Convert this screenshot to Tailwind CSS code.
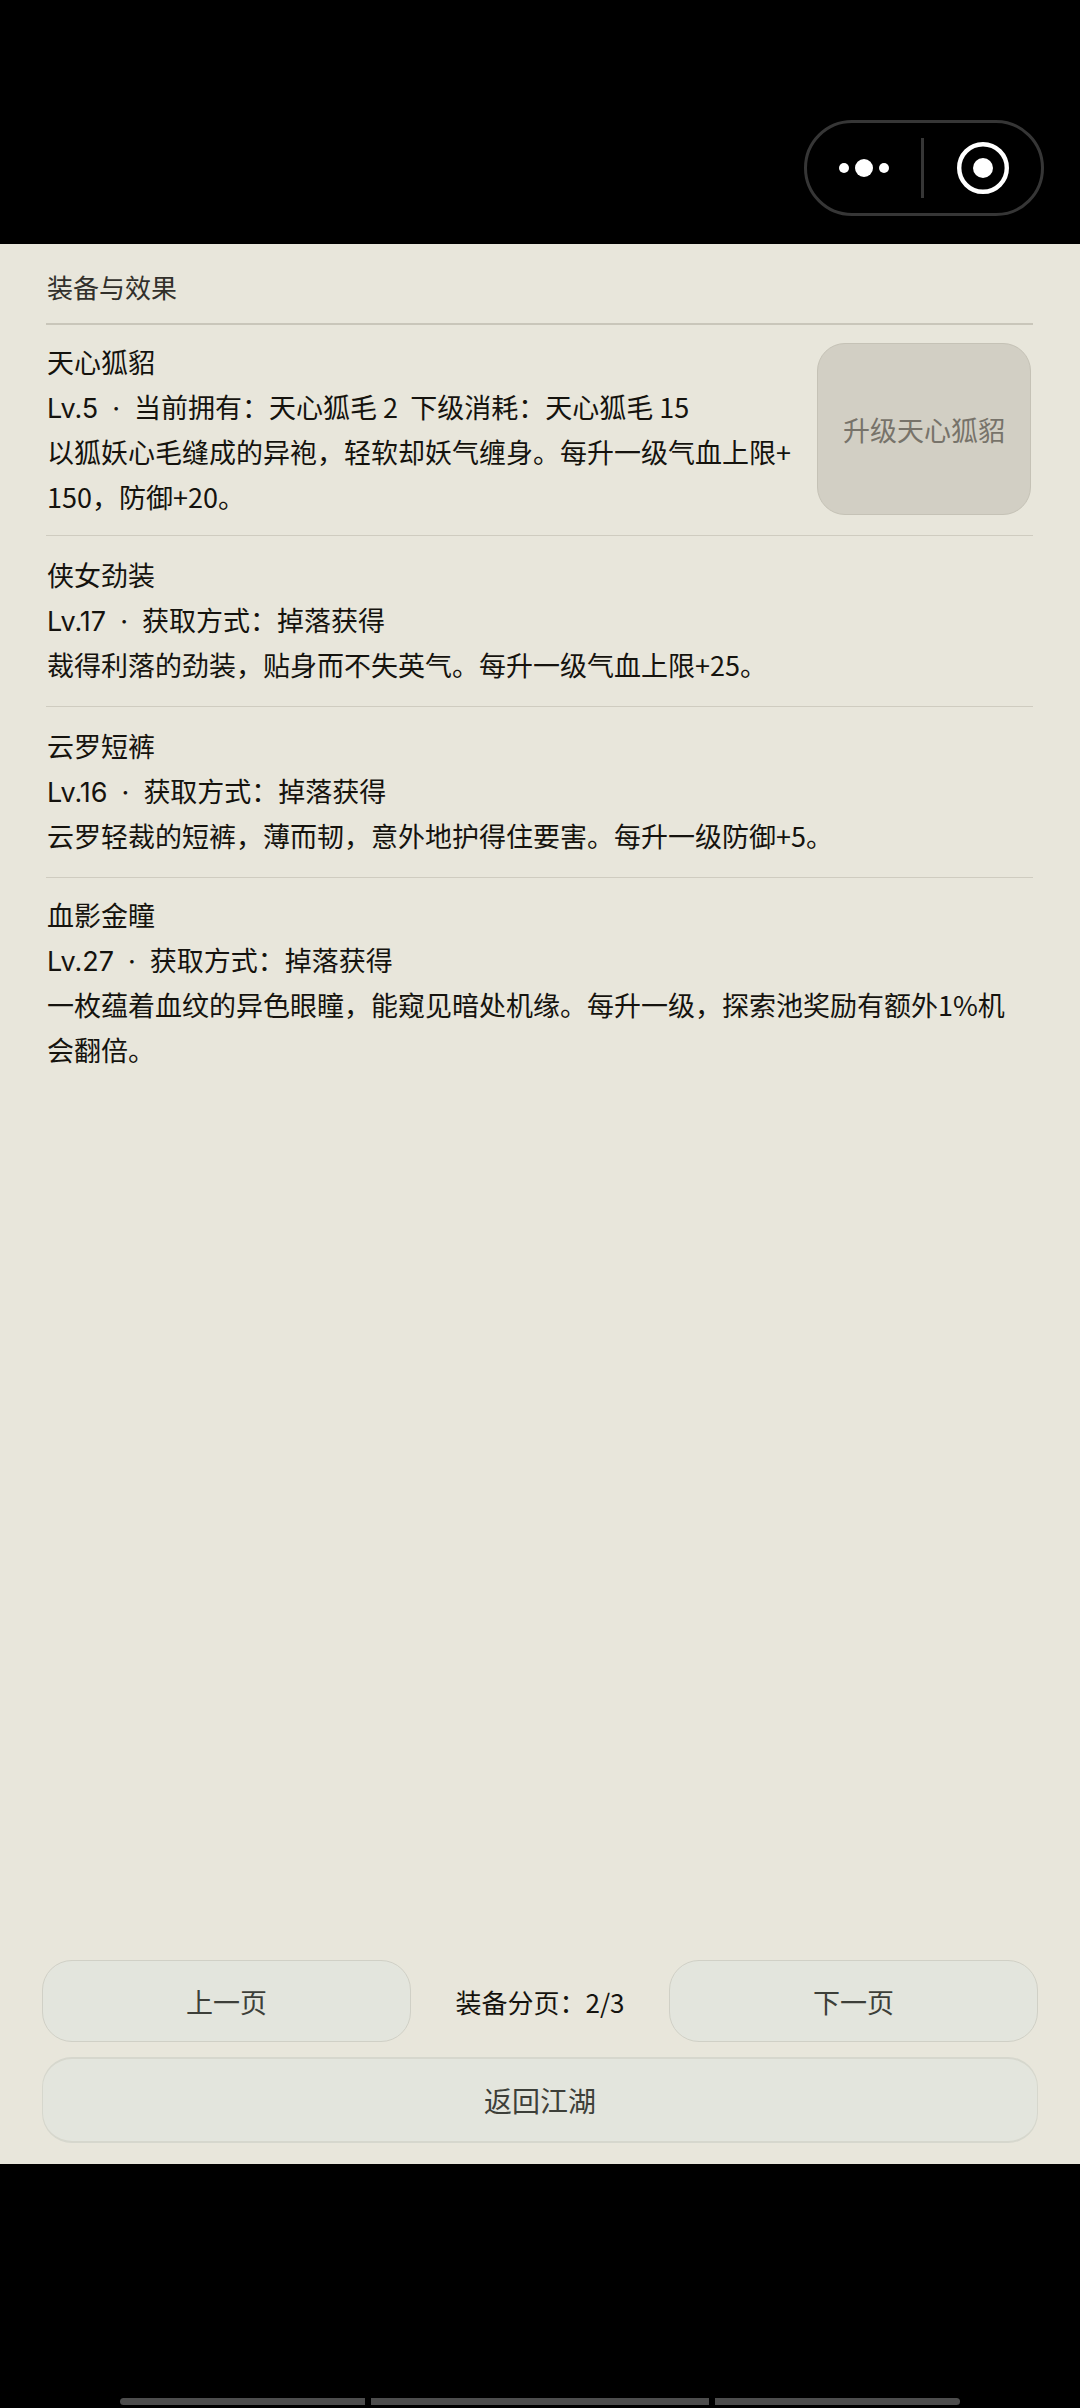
<!DOCTYPE html>
<html lang="zh-CN">
<head>
    <meta charset="UTF-8">
    <meta name="viewport" content="width=device-width, initial-scale=1.0">
    <title>装备与效果</title>
    <script src="https://cdn.jsdelivr.net/npm/@tailwindcss/browser@4"></script>
</head>
<body class="bg-black font-['Noto_Sans_CJK_SC',sans-serif] text-[27px] leading-[45px] text-[#15130e]">
    <div class="flex min-h-screen flex-col">
        <!-- Mini program capsule -->
        <header class="flex justify-end pt-[120px] pr-9 pb-7">
            <div class="flex h-24 w-60 items-center rounded-full border-3 border-[#363636]">
                <button type="button" aria-label="更多" class="flex h-full w-[114px] items-center justify-center">
                    <svg class="h-5 w-14" viewBox="0 0 56 20" fill="#fff">
                        <circle cx="8" cy="10" r="5"/>
                        <circle cx="28" cy="10" r="9"/>
                        <circle cx="48" cy="10" r="5"/>
                    </svg>
                </button>
                <span class="h-15 w-[3px] bg-[#363636]"></span>
                <button type="button" aria-label="关闭" class="flex h-full flex-1 items-center justify-center">
                    <svg class="size-[52px]" viewBox="0 0 52 52">
                        <circle cx="26" cy="26" r="23.8" fill="none" stroke="#fff" stroke-width="4.4"/>
                        <circle cx="26" cy="26" r="10" fill="#fff"/>
                    </svg>
                </button>
            </div>
        </header>

        <main class="flex flex-1 flex-col bg-[#e8e6db]">
            <!-- Equipment list -->
            <section class="flex-1 pr-[47px] pl-[46px]">
                <h1 class="border-b-2 border-[#c9c6ba] pt-5 pb-3.5 pl-px text-[26px] text-[#32302b]">装备与效果</h1>
                <ul>
                    <li class="flex items-center gap-4 border-b border-[#cfccc0] pt-3.5 pr-0.5 pb-4 pl-px">
                        <div class="flex-1 break-all">
                            <h2>天心狐貂</h2>
                            <p><span class="font-['Inter',sans-serif] leading-none">Lv.5<span class="mx-3.5">·</span></span>当前拥有：天心狐毛 2&nbsp; 下级消耗：天心狐毛 15</p>
                            <p>以狐妖心毛缝成的异袍，轻软却妖气缠身。每升一级气血上限+150，防御+20。</p>
                        </div>
                        <button type="button" disabled class="h-[172px] w-[214px] rounded-[28px] border border-[#c5c2b6] bg-[#d2cfc4] text-[#77736a]">升级天心狐貂</button>
                    </li>
                    <li class="border-b border-[#cfccc0] pt-4 pr-0.5 pb-[19px] pl-px">
                        <h2>侠女劲装</h2>
                        <p><span class="font-['Inter',sans-serif] leading-none">Lv.17<span class="mx-3.5">·</span></span>获取方式：掉落获得</p>
                        <p>裁得利落的劲装，贴身而不失英气。每升一级气血上限+25。</p>
                    </li>
                    <li class="border-b border-[#cfccc0] pt-4 pr-0.5 pb-[19px] pl-px">
                        <h2>云罗短裤</h2>
                        <p><span class="font-['Inter',sans-serif] leading-none">Lv.16<span class="mx-3.5">·</span></span>获取方式：掉落获得</p>
                        <p>云罗轻裁的短裤，薄而韧，意外地护得住要害。每升一级防御+5。</p>
                    </li>
                    <li class="pt-3.5 pr-0.5 pl-px break-all">
                        <h2>血影金瞳</h2>
                        <p><span class="font-['Inter',sans-serif] leading-none">Lv.27<span class="mx-3.5">·</span></span>获取方式：掉落获得</p>
                        <p>一枚蕴着血纹的异色眼瞳，能窥见暗处机缘。每升一级，探索池奖励有额外1%机会翻倍。</p>
                    </li>
                </ul>
            </section>

            <!-- Pager -->
            <nav class="flex flex-col gap-[15px] px-[42px] pb-[21px]">
                <div class="flex items-center">
                    <button type="button" class="h-[82px] flex-1 rounded-[30px] border border-[#d0d0c6] bg-[#e3e5dd] text-[#3d3f39]">上一页</button>
                    <p class="w-[258px] text-center text-[26px]">装备分页：2/3</p>
                    <button type="button" class="h-[82px] flex-1 rounded-[30px] border border-[#d0d0c6] bg-[#e3e5dd] text-[#3d3f39]">下一页</button>
                </div>
                <button type="button" class="h-[86px] w-full rounded-[30px] border-x border-y-2 border-[#d6d7cd] bg-[#e3e5dd] text-[28px] text-[#3d3f39]">返回江湖</button>
            </nav>
        </main>

        <!-- System gesture bar -->
        <footer class="flex h-[244px] items-end gap-1.5 px-[120px] pb-[3px]">
            <span class="h-[7px] w-[245px] rounded-l-full bg-[#4d4d4d]"></span>
            <span class="h-[7px] flex-1 bg-[#4d4d4d]"></span>
            <span class="h-[7px] w-[245px] rounded-r-full bg-[#4d4d4d]"></span>
        </footer>
    </div>
</body>
</html>
